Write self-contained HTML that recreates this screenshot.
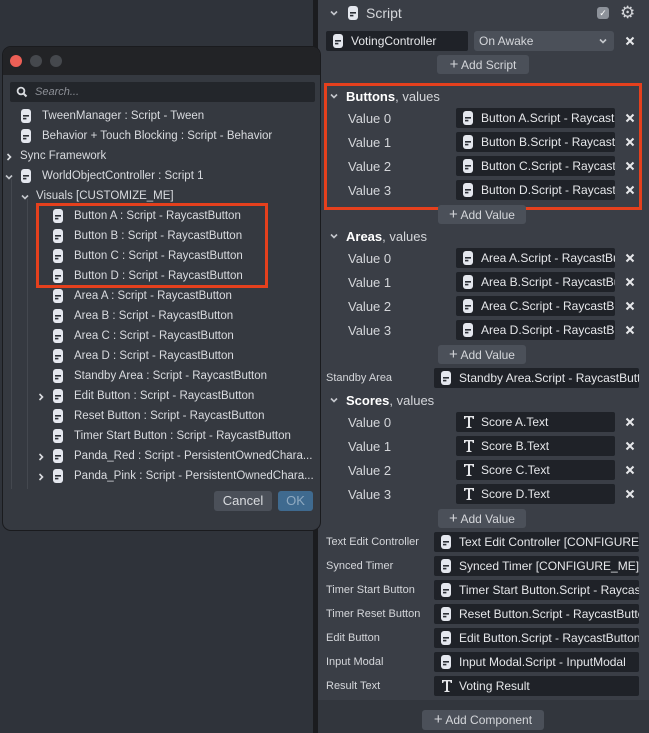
<!DOCTYPE html>
<html><head><meta charset="utf-8"><style>
*{box-sizing:border-box;margin:0;padding:0}
body{width:649px;height:733px;overflow:hidden;background:#2f333a;font-family:"Liberation Sans",sans-serif;font-size:12px;color:#d4d6da;position:relative}
.a{position:absolute;white-space:nowrap}
.panel{position:absolute;left:318px;top:0;width:331px;height:733px;background:#3a3e46}
.strip{position:absolute;left:313px;top:0;width:5px;height:733px;background:#1b1c1f}
.fld{position:absolute;height:20px;background:#1f2228;border-radius:2px;color:#e6e7ea;font-size:12px;line-height:20px;padding-left:25px;overflow:hidden;white-space:nowrap}
.fld svg{position:absolute;left:7px;top:3px}
.x{position:absolute;width:10px;height:10px}
.btn{position:absolute;height:19px;background:#4b5059;border-radius:3px;color:#d4d6da;font-size:12px;line-height:19px;text-align:center}
.lbl{position:absolute;left:348px;font-size:13px;color:#d4d6da}
.hdr{position:absolute;left:346px;font-size:13px;color:#d4d6da}
.hdr b{color:#fff;font-weight:bold}
.slbl{position:absolute;left:326px;font-size:11px;color:#d4d6da}
.dlg{position:absolute;left:2px;top:46px;width:319px;height:485px;background:#353940;border-radius:9px;border:1px solid #1a1b1e;overflow:hidden}
.tb{position:absolute;left:0;top:0;width:100%;height:28px;background:#222326}
.dot{position:absolute;top:8px;width:12px;height:12px;border-radius:50%}
.row{position:absolute;font-size:11.5px;color:#d9dbdf;white-space:nowrap}
.row svg{position:absolute;left:-21px;top:-1px}
.red{position:absolute;border:3px solid #e5401d}
.cv{position:absolute}
</style></head><body>
<svg width="0" height="0" style="position:absolute"><defs>
<symbol id="s" viewBox="0 0 10 14"><rect x="0" y="0" width="10" height="14" rx="3" fill="#e4e7ee"/><rect x="2" y="6" width="6" height="1.6" fill="#2b2e35"/><rect x="2" y="8.8" width="3.4" height="1.6" fill="#2b2e35"/></symbol>
<symbol id="t" viewBox="0 0 12 14"><path d="M1 1h10v3h-1.2l-.6-1.6H7v9.2l1.6.6V13H3.4v-.8l1.6-.6V2.4H2.8L2.2 4H1z" fill="#e6e7ea"/></symbol>
<symbol id="d" viewBox="0 0 10 10"><path d="M2 3.5l3 3 3-3" fill="none" stroke="#c4c7cc" stroke-width="1.6"/></symbol>
<symbol id="r" viewBox="0 0 10 10"><path d="M3.5 2l3 3-3 3" fill="none" stroke="#d9dbdf" stroke-width="1.6"/></symbol>
<symbol id="x" viewBox="0 0 10 10"><path d="M1.5 1.5l7 7M8.5 1.5l-7 7" stroke="#e6e7ea" stroke-width="2"/></symbol>
</defs></svg>

<div class="strip"></div>
<div class="panel"></div>

<svg class="cv" style="left:329px;top:8px" width="10" height="10"><use href="#d"/></svg>
<svg class="a" style="left:348px;top:6px" width="10" height="14"><use href="#s"/></svg>
<div class="a" style="left:366px;top:5px;font-size:14px;color:#d4d6da">Script</div>
<div class="a" style="left:597px;top:7px;width:12px;height:12px;background:#8d929a;border-radius:3px;color:#fff;font-size:9px;text-align:center;line-height:12px">✓</div>
<div class="a" style="left:620px;top:3px;font-size:17px;color:#d4d6da">⚙</div>

<div class="fld" style="left:326px;top:31px;width:142px"><svg width="10" height="14"><use href="#s"/></svg>VotingController</div>
<div class="a" style="left:474px;top:31px;width:140px;height:20px;background:#4b5059;border-radius:3px;padding-left:5px;line-height:20px;font-size:12px;color:#d4d6da">On Awake<svg style="position:absolute;right:6px;top:5px" width="10" height="10"><use href="#d"/></svg></div>
<svg class="x" style="left:625px;top:36px"><use href="#x"/></svg>
<div class="btn" style="left:437px;top:55px;width:92px"><b style="font-size:15px;font-weight:normal">+</b> Add Script</div>

<div class="red" style="left:324px;top:83px;width:318px;height:127px"></div>

<svg class="cv" style="left:329px;top:91px" width="10" height="10"><use href="#d"/></svg>
<div class="hdr" style="top:89px"><b>Buttons</b>, values</div>
<div class="lbl" style="top:111px">Value 0</div>
<div class="lbl" style="top:135px">Value 1</div>
<div class="lbl" style="top:159px">Value 2</div>
<div class="lbl" style="top:183px">Value 3</div>
<div class="fld" style="left:456px;top:108px;width:159px"><svg width="10" height="14"><use href="#s"/></svg>Button A.Script - RaycastButton</div>
<div class="fld" style="left:456px;top:132px;width:159px"><svg width="10" height="14"><use href="#s"/></svg>Button B.Script - RaycastButton</div>
<div class="fld" style="left:456px;top:156px;width:159px"><svg width="10" height="14"><use href="#s"/></svg>Button C.Script - RaycastButton</div>
<div class="fld" style="left:456px;top:180px;width:159px"><svg width="10" height="14"><use href="#s"/></svg>Button D.Script - RaycastButton</div>
<svg class="x" style="left:625px;top:113px"><use href="#x"/></svg><svg class="x" style="left:625px;top:137px"><use href="#x"/></svg><svg class="x" style="left:625px;top:161px"><use href="#x"/></svg><svg class="x" style="left:625px;top:185px"><use href="#x"/></svg>
<div class="btn" style="left:438px;top:205px;width:88px"><b style="font-size:15px;font-weight:normal">+</b> Add Value</div>

<svg class="cv" style="left:329px;top:231px" width="10" height="10"><use href="#d"/></svg>
<div class="hdr" style="top:229px"><b>Areas</b>, values</div>
<div class="lbl" style="top:251px">Value 0</div>
<div class="lbl" style="top:275px">Value 1</div>
<div class="lbl" style="top:299px">Value 2</div>
<div class="lbl" style="top:323px">Value 3</div>
<div class="fld" style="left:456px;top:248px;width:159px"><svg width="10" height="14"><use href="#s"/></svg>Area A.Script - RaycastButton</div>
<div class="fld" style="left:456px;top:272px;width:159px"><svg width="10" height="14"><use href="#s"/></svg>Area B.Script - RaycastButton</div>
<div class="fld" style="left:456px;top:296px;width:159px"><svg width="10" height="14"><use href="#s"/></svg>Area C.Script - RaycastButton</div>
<div class="fld" style="left:456px;top:320px;width:159px"><svg width="10" height="14"><use href="#s"/></svg>Area D.Script - RaycastButton</div>
<svg class="x" style="left:625px;top:253px"><use href="#x"/></svg><svg class="x" style="left:625px;top:277px"><use href="#x"/></svg><svg class="x" style="left:625px;top:301px"><use href="#x"/></svg><svg class="x" style="left:625px;top:325px"><use href="#x"/></svg>
<div class="btn" style="left:438px;top:345px;width:88px"><b style="font-size:15px;font-weight:normal">+</b> Add Value</div>

<div class="slbl" style="top:372px">Standby Area</div>
<div class="fld" style="left:434px;top:368px;width:205px"><svg width="10" height="14"><use href="#s"/></svg>Standby Area.Script - RaycastButton</div>

<svg class="cv" style="left:329px;top:395px" width="10" height="10"><use href="#d"/></svg>
<div class="hdr" style="top:393px"><b>Scores</b>, values</div>
<div class="lbl" style="top:415px">Value 0</div>
<div class="lbl" style="top:439px">Value 1</div>
<div class="lbl" style="top:463px">Value 2</div>
<div class="lbl" style="top:487px">Value 3</div>
<div class="fld" style="left:456px;top:412px;width:159px"><svg width="12" height="14"><use href="#t"/></svg>Score A.Text</div>
<div class="fld" style="left:456px;top:436px;width:159px"><svg width="12" height="14"><use href="#t"/></svg>Score B.Text</div>
<div class="fld" style="left:456px;top:460px;width:159px"><svg width="12" height="14"><use href="#t"/></svg>Score C.Text</div>
<div class="fld" style="left:456px;top:484px;width:159px"><svg width="12" height="14"><use href="#t"/></svg>Score D.Text</div>
<svg class="x" style="left:625px;top:417px"><use href="#x"/></svg><svg class="x" style="left:625px;top:441px"><use href="#x"/></svg><svg class="x" style="left:625px;top:465px"><use href="#x"/></svg><svg class="x" style="left:625px;top:489px"><use href="#x"/></svg>
<div class="btn" style="left:438px;top:509px;width:88px"><b style="font-size:15px;font-weight:normal">+</b> Add Value</div>

<div class="slbl" style="top:536px">Text Edit Controller</div>
<div class="slbl" style="top:560px">Synced Timer</div>
<div class="slbl" style="top:584px">Timer Start Button</div>
<div class="slbl" style="top:608px">Timer Reset Button</div>
<div class="slbl" style="top:632px">Edit Button</div>
<div class="slbl" style="top:656px">Input Modal</div>
<div class="slbl" style="top:680px">Result Text</div>
<div class="fld" style="left:434px;top:532px;width:205px"><svg width="10" height="14"><use href="#s"/></svg>Text Edit Controller [CONFIGURE_ME]</div>
<div class="fld" style="left:434px;top:556px;width:205px"><svg width="10" height="14"><use href="#s"/></svg>Synced Timer [CONFIGURE_ME].Script</div>
<div class="fld" style="left:434px;top:580px;width:205px"><svg width="10" height="14"><use href="#s"/></svg>Timer Start Button.Script - RaycastButton</div>
<div class="fld" style="left:434px;top:604px;width:205px"><svg width="10" height="14"><use href="#s"/></svg>Reset Button.Script - RaycastButton</div>
<div class="fld" style="left:434px;top:628px;width:205px"><svg width="10" height="14"><use href="#s"/></svg>Edit Button.Script - RaycastButton</div>
<div class="fld" style="left:434px;top:652px;width:205px"><svg width="10" height="14"><use href="#s"/></svg>Input Modal.Script - InputModal</div>
<div class="fld" style="left:434px;top:676px;width:205px"><svg width="12" height="14"><use href="#t"/></svg>Voting Result</div>
<div class="a" style="left:318px;top:700px;width:331px;height:33px;background:#32363d"></div>
<div class="btn" style="left:422px;top:710px;width:122px;height:20px;line-height:20px"><b style="font-size:15px;font-weight:normal">+</b> Add Component</div>

<div class="dlg">
 <div class="tb"></div>
 <div class="dot" style="left:7px;background:#ec5f56"></div>
 <div class="dot" style="left:27px;background:#45484d"></div>
 <div class="dot" style="left:47px;background:#45484d"></div>
 <div class="a" style="left:7px;top:35px;width:305px;height:20px;background:#23262b;border-radius:2px"></div>
 <svg class="a" style="left:13px;top:39px" width="12" height="12"><circle cx="5" cy="5" r="3.4" fill="none" stroke="#d9dbdf" stroke-width="1.8"/><path d="M7.5 7.5l3 3" stroke="#d9dbdf" stroke-width="2"/></svg>
 <div class="a" style="left:32px;top:39px;font-size:11px;font-style:italic;color:#8d9097">Search...</div>
 <div class="a" style="left:8px;top:132px;width:1px;height:310px;background:#44484f"></div>
 <div class="a" style="left:24px;top:152px;width:1px;height:290px;background:#44484f"></div>
</div>
<div class="row" style="left:42px;top:110px"><svg width="10" height="14"><use href="#s"/></svg>TweenManager : Script - Tween</div>
<div class="row" style="left:42px;top:130px"><svg width="10" height="14"><use href="#s"/></svg>Behavior + Touch Blocking : Script - Behavior</div>
<svg class="cv" style="left:4px;top:152px" width="10" height="10"><use href="#r"/></svg>
<div class="row" style="left:20px;top:150px">Sync Framework</div>
<svg class="cv" style="left:4px;top:172px" width="10" height="10"><use href="#d"/></svg>
<div class="row" style="left:42px;top:170px"><svg width="10" height="14"><use href="#s"/></svg>WorldObjectController : Script 1</div>
<svg class="cv" style="left:20px;top:192px" width="10" height="10"><use href="#d"/></svg>
<div class="row" style="left:36px;top:190px">Visuals [CUSTOMIZE_ME]</div>
<div class="row" style="left:74px;top:210px"><svg width="10" height="14"><use href="#s"/></svg>Button A : Script - RaycastButton</div>
<div class="row" style="left:74px;top:230px"><svg width="10" height="14"><use href="#s"/></svg>Button B : Script - RaycastButton</div>
<div class="row" style="left:74px;top:250px"><svg width="10" height="14"><use href="#s"/></svg>Button C : Script - RaycastButton</div>
<div class="row" style="left:74px;top:270px"><svg width="10" height="14"><use href="#s"/></svg>Button D : Script - RaycastButton</div>
<div class="row" style="left:74px;top:290px"><svg width="10" height="14"><use href="#s"/></svg>Area A : Script - RaycastButton</div>
<div class="row" style="left:74px;top:310px"><svg width="10" height="14"><use href="#s"/></svg>Area B : Script - RaycastButton</div>
<div class="row" style="left:74px;top:330px"><svg width="10" height="14"><use href="#s"/></svg>Area C : Script - RaycastButton</div>
<div class="row" style="left:74px;top:350px"><svg width="10" height="14"><use href="#s"/></svg>Area D : Script - RaycastButton</div>
<div class="row" style="left:74px;top:370px"><svg width="10" height="14"><use href="#s"/></svg>Standby Area : Script - RaycastButton</div>
<svg class="cv" style="left:36px;top:392px" width="10" height="10"><use href="#r"/></svg>
<div class="row" style="left:74px;top:390px"><svg width="10" height="14"><use href="#s"/></svg>Edit Button : Script - RaycastButton</div>
<div class="row" style="left:74px;top:410px"><svg width="10" height="14"><use href="#s"/></svg>Reset Button : Script - RaycastButton</div>
<div class="row" style="left:74px;top:430px"><svg width="10" height="14"><use href="#s"/></svg>Timer Start Button : Script - RaycastButton</div>
<svg class="cv" style="left:36px;top:452px" width="10" height="10"><use href="#r"/></svg>
<div class="row" style="left:74px;top:450px"><svg width="10" height="14"><use href="#s"/></svg>Panda_Red : Script - PersistentOwnedChara...</div>
<svg class="cv" style="left:36px;top:472px" width="10" height="10"><use href="#r"/></svg>
<div class="row" style="left:74px;top:470px"><svg width="10" height="14"><use href="#s"/></svg>Panda_Pink : Script - PersistentOwnedChara...</div>
<div class="red" style="left:36px;top:203px;width:232px;height:85px"></div>
<div class="btn" style="left:214px;top:491px;width:58px;height:20px;line-height:20px;font-size:13px;color:#d9dbdf">Cancel</div>
<div class="btn" style="left:278px;top:491px;width:35px;height:20px;line-height:20px;font-size:13px;background:#3f6a8f;color:#8fa9c0">OK</div>
</body></html>
